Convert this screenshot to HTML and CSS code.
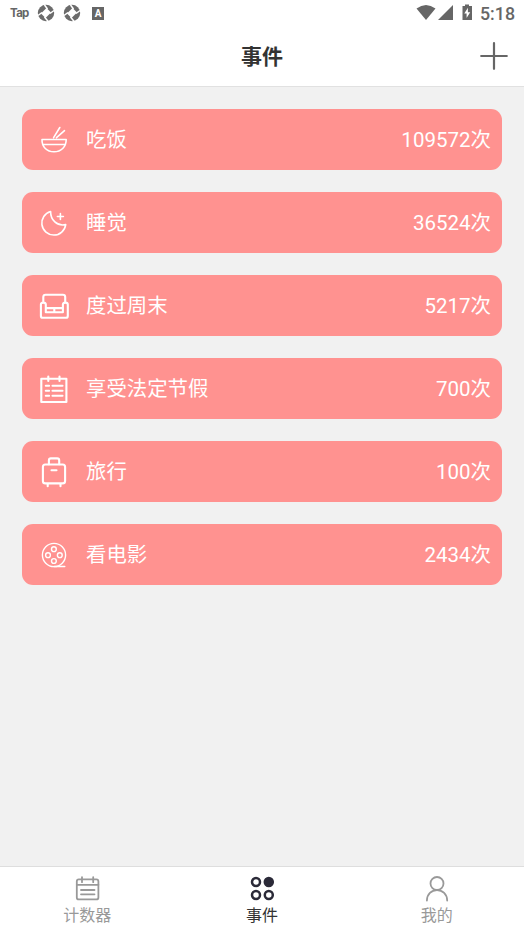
FILE: index.html
```html
<!DOCTYPE html>
<html lang="zh-CN">
<head>
<meta charset="utf-8">
<title>事件</title>
<link rel="stylesheet" href="styles.css">
</head>
<body>
<div class="app">
  <div class="status">
    <div class="status-left">
      <span class="tap">Tap</span>
      <svg class="shutter" viewBox="0 0 18 18"><circle cx="9" cy="9" r="8.2" fill="#6b6b6b"/><path d="M9.500 4 14 8.500 8.500 14 4 9.500Z" fill="#fff"/><path d="M10.500 5 7.500 1M13 9.500 17 6.500M7.500 13 11 17.200M5 8.500 1 11.500" stroke="#fff" stroke-width="1.500"/></svg>
      <svg class="shutter" viewBox="0 0 18 18"><circle cx="9" cy="9" r="8.2" fill="#6b6b6b"/><path d="M9.500 4 14 8.500 8.500 14 4 9.500Z" fill="#fff"/><path d="M10.500 5 7.500 1M13 9.500 17 6.500M7.500 13 11 17.200M5 8.500 1 11.500" stroke="#fff" stroke-width="1.500"/></svg>
      <span class="badge">A</span>
    </div>
    <div class="status-right">
      <svg width="56" height="18" viewBox="0 0 56 18" fill="#666"><path d="M.500 4.500Q10-2.500 19.500 4.500L10 16Z"/><path d="M37 1v15H22Z"/><path d="M46.500 2h2.500V.5h4V2h3v14H46.500Z"/><path d="M51.900 3.800 48.300 9.600h2.300V14l3.600-5.800h-2.300Z" fill="#fff"/></svg>
      <span class="clock">5:18</span>
    </div>
  </div>
  <header class="header">
    <h1>事件</h1>
    <svg class="add" viewBox="0 0 28 28"><path d="M14 1.200v25.600M1.200 14h25.600"/></svg>
  </header>
  <main class="list">
    <div class="card">
      <svg class="icon" viewBox="0 0 40 40"><path d="M8 20.500h24.200C32.200 28 27 32.800 20 32.800S7.800 28 8 20.500ZM8.700 25.500h22.600M19.600 18.700l6.200-10.200M22.500 18.700l8-7"/></svg>
      <span class="name">吃饭</span><span class="count">109572次</span>
    </div>
    <div class="card">
      <svg class="icon" viewBox="0 0 40 40"><path d="M16.600 9.500A12 12 0 1 0 31.700 22.600C23 24.500 16.500 18 16.600 9.500ZM26.400 11.500v6M23.400 14.500h6"/></svg>
      <span class="name">睡觉</span><span class="count">36524次</span>
    </div>
    <div class="card">
      <svg class="icon bold" viewBox="0 0 40 40"><path d="M9.300 17v-5q0-2.300 2.300-2.300h17.300q2.300 0 2.300 2.300V17M11.800 23.200V19.500q0-1.900-2.500-1.900T6.900 19.500v11.500q0 1.800 1.800 1.800h23.300q1.800 0 1.800-1.800V19.500q0-1.900-2.400-1.900T28.900 19.500v7.700H11.800V19.500M11.800 23.100h17.100M20.300 23.100v4"/></svg>
      <span class="name">度过周末</span><span class="count">5217次</span>
    </div>
    <div class="card">
      <svg class="icon bold" viewBox="0 0 40 40"><path d="M7.300 10.800h25.100v23.200H7.300ZM14.300 8.500v4.500M25.500 8.500v4.500M11.800 17.800h3.300M18.500 17.800h10M11.800 22.700h3.300M18.500 22.700h10M11.800 27.700h3.300M18.500 27.700h10"/></svg>
      <span class="name">享受法定节假</span><span class="count">700次</span>
    </div>
    <div class="card">
      <svg class="icon bold" viewBox="0 0 40 40"><rect x="8.900" y="13.500" width="22.200" height="18.900" rx="2.500"/><path d="M14.900 13.200V9.400q0-2 2-2h6.300q2 0 2 2v3.800M17.500 19.200h5M13.700 33v2.200M26.500 33v2.200"/></svg>
      <span class="name">旅行</span><span class="count">100次</span>
    </div>
    <div class="card">
      <svg class="icon thin" viewBox="0 0 40 40"><circle cx="20" cy="21" r="11.600"/><circle cx="19.900" cy="15.200" r="2.400"/><circle cx="14" cy="21.200" r="2.400"/><circle cx="25.800" cy="21.200" r="2.400"/><circle cx="19.900" cy="27" r="2.400"/><path d="M20 32.500h10.800"/></svg>
      <span class="name">看电影</span><span class="count">2434次</span>
    </div>
  </main>
  <nav class="tabs">
    <div class="tab">
      <svg viewBox="0 0 28 28"><rect x="3.800" y="5.400" width="21.600" height="20" rx="2"/><path d="M3.800 10.800h21.600M9 3.200v5M20.200 3.200v5M8 16h13.500M8 20.300h13.500"/></svg>
      <span>计数器</span>
    </div>
    <div class="tab active">
      <svg viewBox="0 0 28 28"><circle cx="8" cy="8" r="4"/><circle cx="20.800" cy="8" r="4" fill="#2b2a38"/><circle cx="8" cy="21" r="4"/><circle cx="20.800" cy="21" r="4"/></svg>
      <span>事件</span>
    </div>
    <div class="tab">
      <svg viewBox="0 0 28 28"><circle cx="14" cy="9.500" r="6.500"/><path d="M3.900 26.500C4 20 8.500 16.100 14 16.100S24.100 20 24.200 26.500"/></svg>
      <span>我的</span>
    </div>
  </nav>
</div>
</body>
</html>
```

FILE: styles.css
```css
* { box-sizing: border-box; }
body { margin: 0; font-family: Roboto, "Noto Sans CJK SC", sans-serif; }
.app { display: flex; flex-direction: column; width: 524px; height: 932px; background: #f1f1f1; }
.status { display: flex; justify-content: space-between; height: 26px; padding: 0 9px 0 10px; background: #fff; color: #666; }
.status-left, .status-right { display: flex; align-items: center; }
.tap { width: 27px; font: 700 11.5px/24px Inter, sans-serif; letter-spacing: -0.7px; }
.shutter { width: 18px; height: 18px; margin-right: 8px; }
.badge { width: 12px; height: 13px; margin-left: 3px; background: #666; color: #fff; font-size: 10px; font-weight: 700; line-height: 13px; text-align: center; }
.clock { width: 35px; margin-left: 8px; padding-top: 2px; font-size: 17.8px; font-weight: 500; line-height: 26px; }
.header { display: grid; grid-template-columns: 1fr auto 1fr; align-items: center; height: 61px; padding: 0 16px; background: #fff; border-bottom: 1px solid #e1e1e1; }
.header h1 { grid-column: 2; margin: 0; padding-top: 2px; font-size: 21px; line-height: 30px; font-weight: 700; color: #333; }
.add { width: 28px; height: 28px; justify-self: end; fill: none; stroke: #666; stroke-width: 2.2; stroke-linecap: round; }
.list { display: flex; flex: 1; flex-direction: column; gap: 22px; padding: 22px; }
.card { display: flex; align-items: center; height: 61px; padding: 0 11px 0 12px; border-radius: 11px; background: #ff9290; color: #fff; font-size: 20.4px; line-height: 30px; }
.icon { width: 40px; height: 40px; margin-bottom: 1px; fill: none; stroke: #fff; stroke-width: 1.6; stroke-linecap: round; stroke-linejoin: round; }
.bold { stroke-width: 2.1; }
.thin { stroke-width: 1.4; }
.name { margin-left: 12px; }
.count { margin-left: auto; font-size: 20.5px; }
.tabs { display: flex; height: 66px; background: #fff; border-top: 1px solid #dedede; }
.tab { display: flex; flex: 1; flex-direction: column; align-items: center; padding-top: 7px; color: #999; font-size: 16px; line-height: 28px; }
.tab svg { width: 28px; height: 28px; fill: none; stroke: #999; stroke-width: 1.8; stroke-linecap: round; }
.active { color: #333; }
.active svg { stroke: #2b2a38; stroke-width: 2.5; }
```
